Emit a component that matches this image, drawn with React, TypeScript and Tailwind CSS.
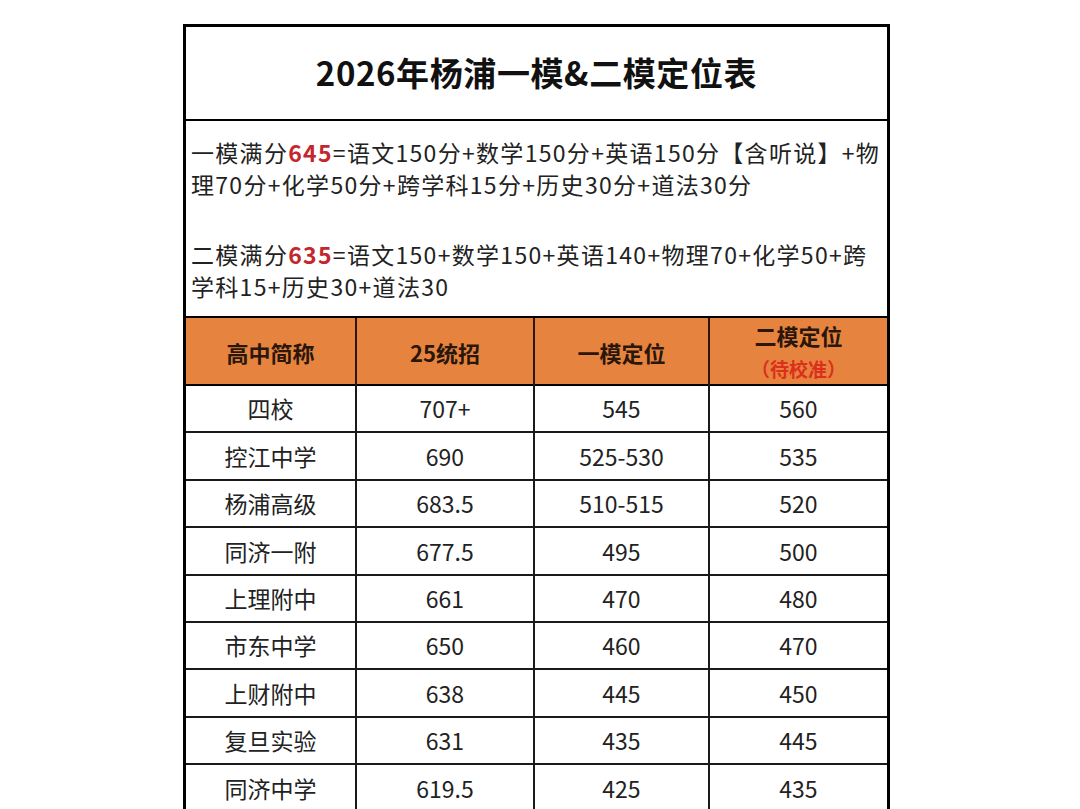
import React from 'react';

const rows = [
  ['四校', '707+', '545', '560'],
  ['控江中学', '690', '525-530', '535'],
  ['杨浦高级', '683.5', '510-515', '520'],
  ['同济一附', '677.5', '495', '500'],
  ['上理附中', '661', '470', '480'],
  ['市东中学', '650', '460', '470'],
  ['上财附中', '638', '445', '450'],
  ['复旦实验', '631', '435', '445'],
  ['同济中学', '619.5', '425', '435'],
  ['', '', '', ''],
];

const font = { fontFamily: '"Noto Sans CJK SC", "Noto Sans", sans-serif' };

const App: React.FC = () => {
  return (
    <div className="h-[809px] w-[1080px] overflow-hidden bg-white pl-[183px] pt-[24px]" style={font}>
      <div className="w-[707px] border-x-[3px] border-t-[3px] border-black">
        {/* Title */}
        <div className="flex h-[94px] items-center justify-center border-b-2 border-black">
          <h1 className="text-[33px] font-bold tracking-[0.6px] text-[#111]">2026年杨浦一模&amp;二模定位表</h1>
        </div>

        {/* Score notes */}
        <div className="px-[5px] pb-[14px] pt-[15px] text-[23px] leading-[32px] tracking-[1.3px] text-[#222]">
          <p>
            一模满分<span className="font-bold text-[#c4262e]">645</span>=语文150分+数学150分+英语150分【含听说】+物
            <br />
            理70分+化学50分+跨学科15分+历史30分+道法30分
          </p>
          <p className="mt-[38px]">
            二模满分<span className="font-bold text-[#c4262e]">635</span>=语文150+数学150+英语140+物理70+化学50+跨
            <br />
            学科15+历史30+道法30
          </p>
        </div>

        {/* Header */}
        <div className="grid h-[70px] grid-cols-[171px_178px_175px_1fr] border-y-2 border-black bg-[#e6843f] text-[22px] font-bold text-[#2a160a]">
          <div className="flex items-center justify-center border-r-2 border-[#2a160a]">高中简称</div>
          <div className="flex items-center justify-center border-r-2 border-[#2a160a]">25统招</div>
          <div className="flex items-center justify-center border-r-2 border-[#2a160a]">一模定位</div>
          <div className="flex flex-col items-center justify-center leading-[34px]">
            <span>二模定位</span>
            <span className="text-[19px] text-[#dc2f1c]">（待校准）</span>
          </div>
        </div>

        {/* Rows */}
        {rows.map((r, i) => (
          <div
            key={i}
            className="grid h-[47.4px] grid-cols-[171px_178px_175px_1fr] border-b-2 border-[#1a1a1a] text-[23px] text-[#222]"
          >
            {r.map((c, j) => (
              <div
                key={j}
                className={`flex items-center justify-center ${j < 3 ? 'border-r-2 border-[#1a1a1a]' : ''}`}
              >
                {c}
              </div>
            ))}
          </div>
        ))}
      </div>
    </div>
  );
};

export default App;
